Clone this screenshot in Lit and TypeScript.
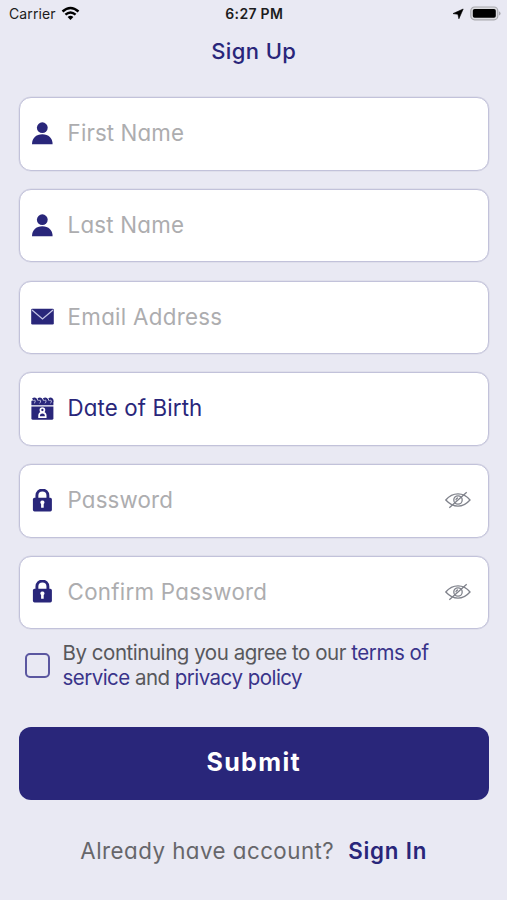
import { LitElement, html, css, svg } from "lit";
import { customElement, property } from "lit/decorators.js";

const icons: Record<string, unknown> = {
  user: svg`<circle cx="12.300" cy="5.700" r="5.400"/><path d="M2 22.300C2 16 6 12.200 12.300 12.200s10.300 3.800 10.300 10.100z"/>`,
  mail: svg`<rect x="1.200" y="3.800" width="22.600" height="15.600" rx="1.200"/><path d="M2 5 12.500 14 23 5" fill="none" stroke="#c4c4e4" stroke-width="1.300"/>`,
  calendar: svg`<path d="M1.400 9.400h22v11.800a1.600 1.600 0 0 1-1.600 1.600H3a1.600 1.600 0 0 1-1.600-1.600z"/>
    <path d="M1.400 8.200V4.500q0-1 1-1h20q1 0 1 1v3.700z"/>
    <path d="M2.600 2.200q3.800-1.800 4 2.400M8 2.200q3.800-1.800 4 2.400M13.400 2.200q3.800-1.800 4 2.400M18.800 2.200q3.600-1.800 3.800 2.400" fill="none" stroke="#29267a" stroke-width="2.200"/>
    <path d="M4 6.200q1.600-.4 1.200-2.600M9.400 6.200q1.600-.4 1.200-2.600M14.800 6.200q1.600-.4 1.200-2.600M20.200 6.200q1.600-.4 1.200-2.600" fill="none" stroke="#c4c4e4" stroke-width=".9"/>
    <g fill="none" stroke="#fff" stroke-width="1.700"><circle cx="12.400" cy="13" r="2"/><path d="M9.100 20.200v-1.600q0-3 3.300-3t3.300 3v1.600z"/></g>`,
  lock: svg`<path d="M6.900 10.200V6.500a5.500 5.500 0 0 1 11 0v3.700" fill="none" stroke="#29267a" stroke-width="2.900"/><rect x="2.900" y="8.800" width="19" height="13.600" rx="1.600"/><path d="M12.400 11.500a2 2 0 0 1 1.300 3.600v3.700h-2.600v-3.700a2 2 0 0 1 1.300-3.600z" fill="#fff"/>`,
};

@customElement("form-field")
class FormField extends LitElement {
  @property() icon = "user";
  @property() label = "";
  @property() spacing = "0";
  @property({ type: Boolean }) active = false;
  @property({ type: Boolean }) secret = false;

  static styles = css`
    :host { display: block; }
    .field {
      box-sizing: border-box;
      height: 73.500px;
      border: 1px solid #c2c2da;
      box-shadow: 0 0 0 0.500px #d5d5e4;
      border-radius: 12px;
      background: #fff;
      display: flex;
      align-items: center;
      padding: 0 17px 0 10px;
    }
    .icon { width: 24px; height: 24px; fill: #29267a; flex: none; }
    .label {
      flex: 1;
      margin-left: 13.600px;
      padding-bottom: 1.500px;
      font-size: 22.300px;
      line-height: 30px;
      font-weight: 400;
      color: #adadaf;
      white-space: nowrap;
    }
    .active { color: #29267a; }
    .eye { width: 27px; height: 20px; fill: none; stroke: #80838c; stroke-width: 1.300; flex: none; margin-top: -1px; }
  `;

  render() {
    return html`<div class="field">
      <svg class="icon" viewBox="0 0 24 24">${icons[this.icon]}</svg>
      <span class="label ${this.active ? "active" : ""}" style="letter-spacing:${this.spacing}px">${this.label}</span>
      ${this.secret
        ? html`<svg class="eye" viewBox="0 0 27 20">
            <path d="M1.800 10Q7 3.800 14 3.800T26 10Q20.500 16.200 14 16.200T1.800 10z" />
            <circle cx="14" cy="10" r="4.200" /><path d="M12 10.200a2 2 0 0 1 2-2.200M5.300 17.800 22.700 2.200" />
          </svg>`
        : ""}
    </div>`;
  }
}

@customElement("app-root")
class AppRoot extends LitElement {
  static styles = css`
    :host {
      display: flex;
      flex-direction: column;
      box-sizing: border-box;
      height: 900px;
      padding: 0 18.500px 0 19px;
      background: #e9e9f3;
      font-family: Inter, "Liberation Sans", sans-serif;
      font-feature-settings: "cv11";
      color: #58585c;
      overflow: hidden;
    }
    .status {
      display: grid;
      grid-template-columns: 1fr auto 1fr;
      align-items: center;
      height: 27px;
      margin: 0 -12px 0 -10px;
      font-size: 14px;
      color: #1c1c20;
      font-feature-settings: normal;
    }
    .carrier { display: flex; align-items: center; gap: 5px; letter-spacing: 0.120px; }
    .time { font-weight: 600; letter-spacing: 0.300px; margin-right: 1px; }
    .indicators { display: flex; align-items: center; justify-content: flex-end; gap: 6px; }
    .wifi { width: 19px; height: 15px; margin-top: -1px; }
    .arrow { width: 12px; height: 12px; }
    .battery { width: 31px; height: 15px; margin-top: -1px; }
    h1 {
      margin: 6px 0 0;
      height: 36px;
      line-height: 36px;
      text-align: center;
      font-size: 22px;
      font-weight: 500;
      letter-spacing: 0.400px;
      color: #29267a;
    }
    .fields { display: flex; flex-direction: column; gap: 18.200px; margin-top: 28.300px; }
    .terms {
      display: flex;
      align-items: center;
      margin-top: 10.500px;
      padding-left: 6px;
      font-size: 20.500px;
      line-height: 25px;
      letter-spacing: -0.460px;
      font-feature-settings: normal;
    }
    .second { letter-spacing: -0.540px; }
    .privacy { letter-spacing: -0.520px; }
    .box { box-sizing: border-box; width: 25px; height: 25px; border: 2px solid #5b57a0; border-radius: 5px; flex: none; margin: 2px 12.500px 0 0; }
    .link { color: #39348a; }
    .submit {
      margin: 37.500px 0 0;
      height: 73px;
      border: 0;
      border-radius: 12px;
      background: #29267a;
      color: #fff;
      font: 700 25px/70px Inter, sans-serif;
      font-feature-settings: "cv11";
      letter-spacing: 1.350px;
      padding: 0 0 3px;
      flex: none;
    }
    .signin { margin-top: 34.500px; display: flex; justify-content: center; align-items: baseline; line-height: 32px; font-size: 22.300px; white-space: nowrap; }
    .ask { font-weight: 400; letter-spacing: 0.480px; color: #66666a; }
    .go { font-weight: 600; color: #29267a; margin-left: 14px; letter-spacing: 0.800px; }
  `;

  render() {
    return html`
      <div class="status">
        <div class="carrier">
          <span>Carrier</span>
          <svg class="wifi" viewBox="0 0 19 15" fill="none" stroke="#000" stroke-width="2.400">
            <path d="M1.500 5.500Q9.500-1.700 17.500 5.500M4.400 8.700Q9.500 4.200 14.600 8.700" />
            <path d="M9.500 13.900 6.600 11Q9.500 8.700 12.400 11z" fill="#000" stroke="none" />
          </svg>
        </div>
        <span class="time">6:27 PM</span>
        <div class="indicators">
          <svg class="arrow" viewBox="0 0 12 12"><path d="M11.200 1 6.900 10.800 5.900 6.300 1 5.600z" stroke="#000" stroke-width=".6" /></svg>
          <svg class="battery" viewBox="0 0 31 15">
            <rect x=".8" y="1" width="27" height="12.800" rx="3.800" fill="#dcdce0" stroke="#a9a9ae" stroke-width="1.200" />
            <rect x="2.800" y="3" width="23" height="8.800" rx="1.800" />
            <path d="M29 5.200q1.600.8 1.600 2.200T29 9.600z" fill="#a9a9ae" />
          </svg>
        </div>
      </div>
      <h1>Sign Up</h1>
      <div class="fields">
        <form-field icon="user" label="First Name" spacing="0.120"></form-field>
        <form-field icon="user" label="Last Name" spacing="0.220"></form-field>
        <form-field icon="mail" label="Email Address" spacing="0.300"></form-field>
        <form-field icon="calendar" label="Date of Birth" spacing="0.120" active></form-field>
        <form-field icon="lock" label="Password" spacing="0.150" secret></form-field>
        <form-field icon="lock" label="Confirm Password" spacing="0.280" secret></form-field>
      </div>
      <div class="terms">
        <span class="box"></span>
        <span>By continuing you agree to our <span class="link">terms of</span><br /><span class="second"><span class="link">service</span> and </span><span class="link privacy">privacy policy</span></span>
      </div>
      <button class="submit">Submit</button>
      <div class="signin"><span class="ask">Already have account?</span><span class="go">Sign In</span></div>
    `;
  }
}
